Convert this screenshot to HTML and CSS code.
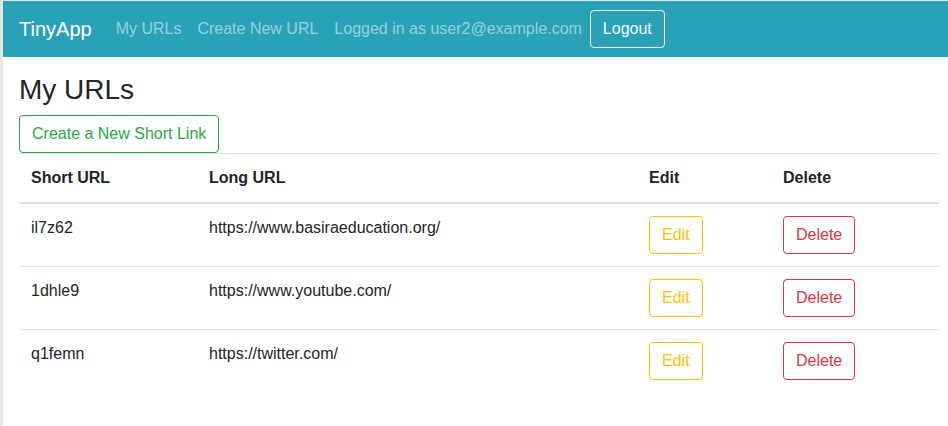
FILE: index.html
```html
<!DOCTYPE html>
<html lang="en">
<head>
<meta charset="utf-8">
<title>TinyApp</title>
<link rel="stylesheet" href="styles.css">
</head>
<body>
<div class="page">
  <nav class="navbar">
    <a class="brand" href="#">TinyApp</a>
    <a class="nav-link" href="#">My URLs</a>
    <a class="nav-link" href="#">Create New URL</a>
    <span class="nav-text">Logged in as user2@example.com</span>
    <button class="btn btn-light">Logout</button>
  </nav>
  <main class="content">
    <h3 class="title">My URLs</h3>
    <button class="btn btn-success">Create a New Short Link</button>
    <table class="table">
      <thead>
        <tr>
          <th class="c1">Short URL</th>
          <th class="c2">Long URL</th>
          <th class="c3">Edit</th>
          <th class="c4">Delete</th>
        </tr>
      </thead>
      <tbody>
        <tr>
          <td>il7z62</td>
          <td>https://www.basiraeducation.org/</td>
          <td><button class="btn btn-warning">Edit</button></td>
          <td><button class="btn btn-danger">Delete</button></td>
        </tr>
        <tr>
          <td>1dhle9</td>
          <td>https://www.youtube.com/</td>
          <td><button class="btn btn-warning">Edit</button></td>
          <td><button class="btn btn-danger">Delete</button></td>
        </tr>
        <tr>
          <td>q1femn</td>
          <td>https://twitter.com/</td>
          <td><button class="btn btn-warning">Edit</button></td>
          <td><button class="btn btn-danger">Delete</button></td>
        </tr>
      </tbody>
    </table>
  </main>
</div>
</body>
</html>
```
FILE: styles.css
```css
* { box-sizing: border-box; }
html, body { height: 100%; }
body {
  margin: 0;
  background: #e4e7eb;
  font-family: "Liberation Sans", Arial, sans-serif;
  font-size: 16px;
  line-height: 1.5;
  color: #212529;
}
.page {
  margin: 1px 0 0 3px;
  background: #fff;
  min-height: calc(100% - 1px);
}
.navbar {
  display: flex;
  align-items: center;
  height: 56px;
  padding: 8px 16px;
  background: #29a2b8;
}
.brand {
  font-size: 20px;
  line-height: 30px;
  padding: 5px 0;
  margin-right: 16px;
  color: #fff;
  text-decoration: none;
}
.nav-link, .nav-text {
  padding: 8px;
  color: rgba(255,255,255,0.5);
  text-decoration: none;
}
.btn {
  font-family: inherit;
  font-size: 16px;
  line-height: 24px;
  padding: 6px 12px;
  border: 1px solid;
  border-radius: 4px;
  background: transparent;
  cursor: pointer;
}
.btn-light { color: #f8f9fa; border-color: #f8f9fa; }
.btn-success { color: #28a745; border-color: #28a745; }
.btn-warning { color: #ffc107; border-color: #ffc107; }
.btn-danger { color: #dc3545; border-color: #dc3545; }
.content {
  padding: 16px 9px 0 16px;
}
.title {
  font-size: 28px;
  font-weight: 500;
  line-height: 1.2;
  margin: 0 0 8px;
}
.table {
  width: 100%;
  border-collapse: collapse;
}
.table th, .table td {
  padding: 12px;
  text-align: left;
  vertical-align: top;
  border-top: 1px solid #dee2e6;
}
.table th { font-weight: bold; }
.table thead th { border-bottom: 2px solid #dee2e6; }
.c1 { width: 178px; }
.c2 { width: 440px; }
.c3 { width: 134px; }
```
